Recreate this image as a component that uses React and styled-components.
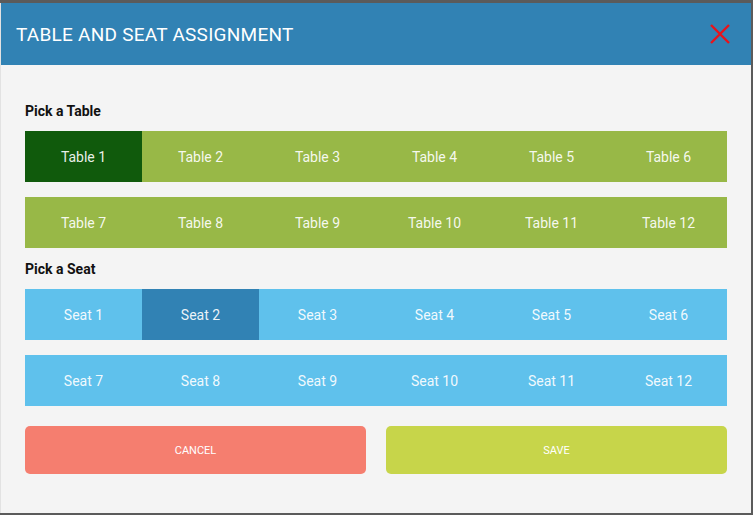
import styled, { createGlobalStyle } from 'styled-components'

const Global = createGlobalStyle`
body {
    margin: 0;
    background: #5b5b5b;
    font-family: Roboto, "Liberation Sans", sans-serif;
}
`

const tables = Array.from({ length: 12 }, (_, i) => `Table ${i + 1}`)
const seats = Array.from({ length: 12 }, (_, i) => `Seat ${i + 1}`)

const App = () => {
  return (
    <>
      <Global />
      <Modal>
        <Header>
          <Title>Table and Seat Assignment</Title>
          <Close aria-label="close">
            <svg width="20" height="20" viewBox="0 0 20 20">
              <path d="M1 1 L19 19 M19 1 L1 19" stroke="#e8141b" strokeWidth="2.4" />
            </svg>
          </Close>
        </Header>
        <Body>
          <Label>Pick a Table</Label>
          <Grid>
            {tables.map((t, i) => (
              <Cell key={t} bg={i === 0 ? '#105a0c' : '#98b847'}>{t}</Cell>
            ))}
          </Grid>
          <Label top>Pick a Seat</Label>
          <Grid>
            {seats.map((s, i) => (
              <Cell key={s} bg={i === 1 ? '#3182b4' : '#5fc1ec'}>{s}</Cell>
            ))}
          </Grid>
          <Actions>
            <Button bg="#f57e6f">Cancel</Button>
            <Button bg="#c7d54a">Save</Button>
          </Actions>
        </Body>
      </Modal>
    </>
  )
}
export default App

const Modal = styled.div`
width: 751px;
margin-top: 3px;
background: #f4f4f4;
border-left: 1px solid #e2e2e2;
box-sizing: border-box;
`
const Header = styled.div`
height: 62px;
background: #3182b4;
display: flex;
align-items: center;
justify-content: space-between;
padding: 0 21px 0 15px;
`
const Title = styled.h1`
margin: 0;
font-size: 19px;
font-weight: 400;
color: #fff;
text-transform: uppercase;
letter-spacing: 0.25px;
`
const Close = styled.div`
width: 20px;
height: 20px;
display: flex;
`
const Body = styled.div`
padding: 37px 24px 39px 24px;
`
const Label = styled.div`
font-size: 14px;
font-weight: 700;
line-height: 18px;
color: #111;
margin: ${({top}) => top ? '12px 0 11px' : '0 0 11px'};
`
const Grid = styled.div`
display: grid;
grid-template-columns: repeat(6, 117px);
grid-auto-rows: 51px;
row-gap: 15px;
`
const Cell = styled.div`
background: ${({bg}) => bg};
color: rgba(255, 255, 255, 0.92);
font-size: 14px;
display: flex;
align-items: center;
justify-content: center;
`
const Actions = styled.div`
display: grid;
grid-template-columns: 341px 341px;
column-gap: 20px;
margin-top: 20px;
`
const Button = styled.div`
height: 48px;
border-radius: 5px;
background: ${({bg}) => bg};
color: #fff;
font-size: 11px;
text-transform: uppercase;
display: flex;
align-items: center;
justify-content: center;
`
